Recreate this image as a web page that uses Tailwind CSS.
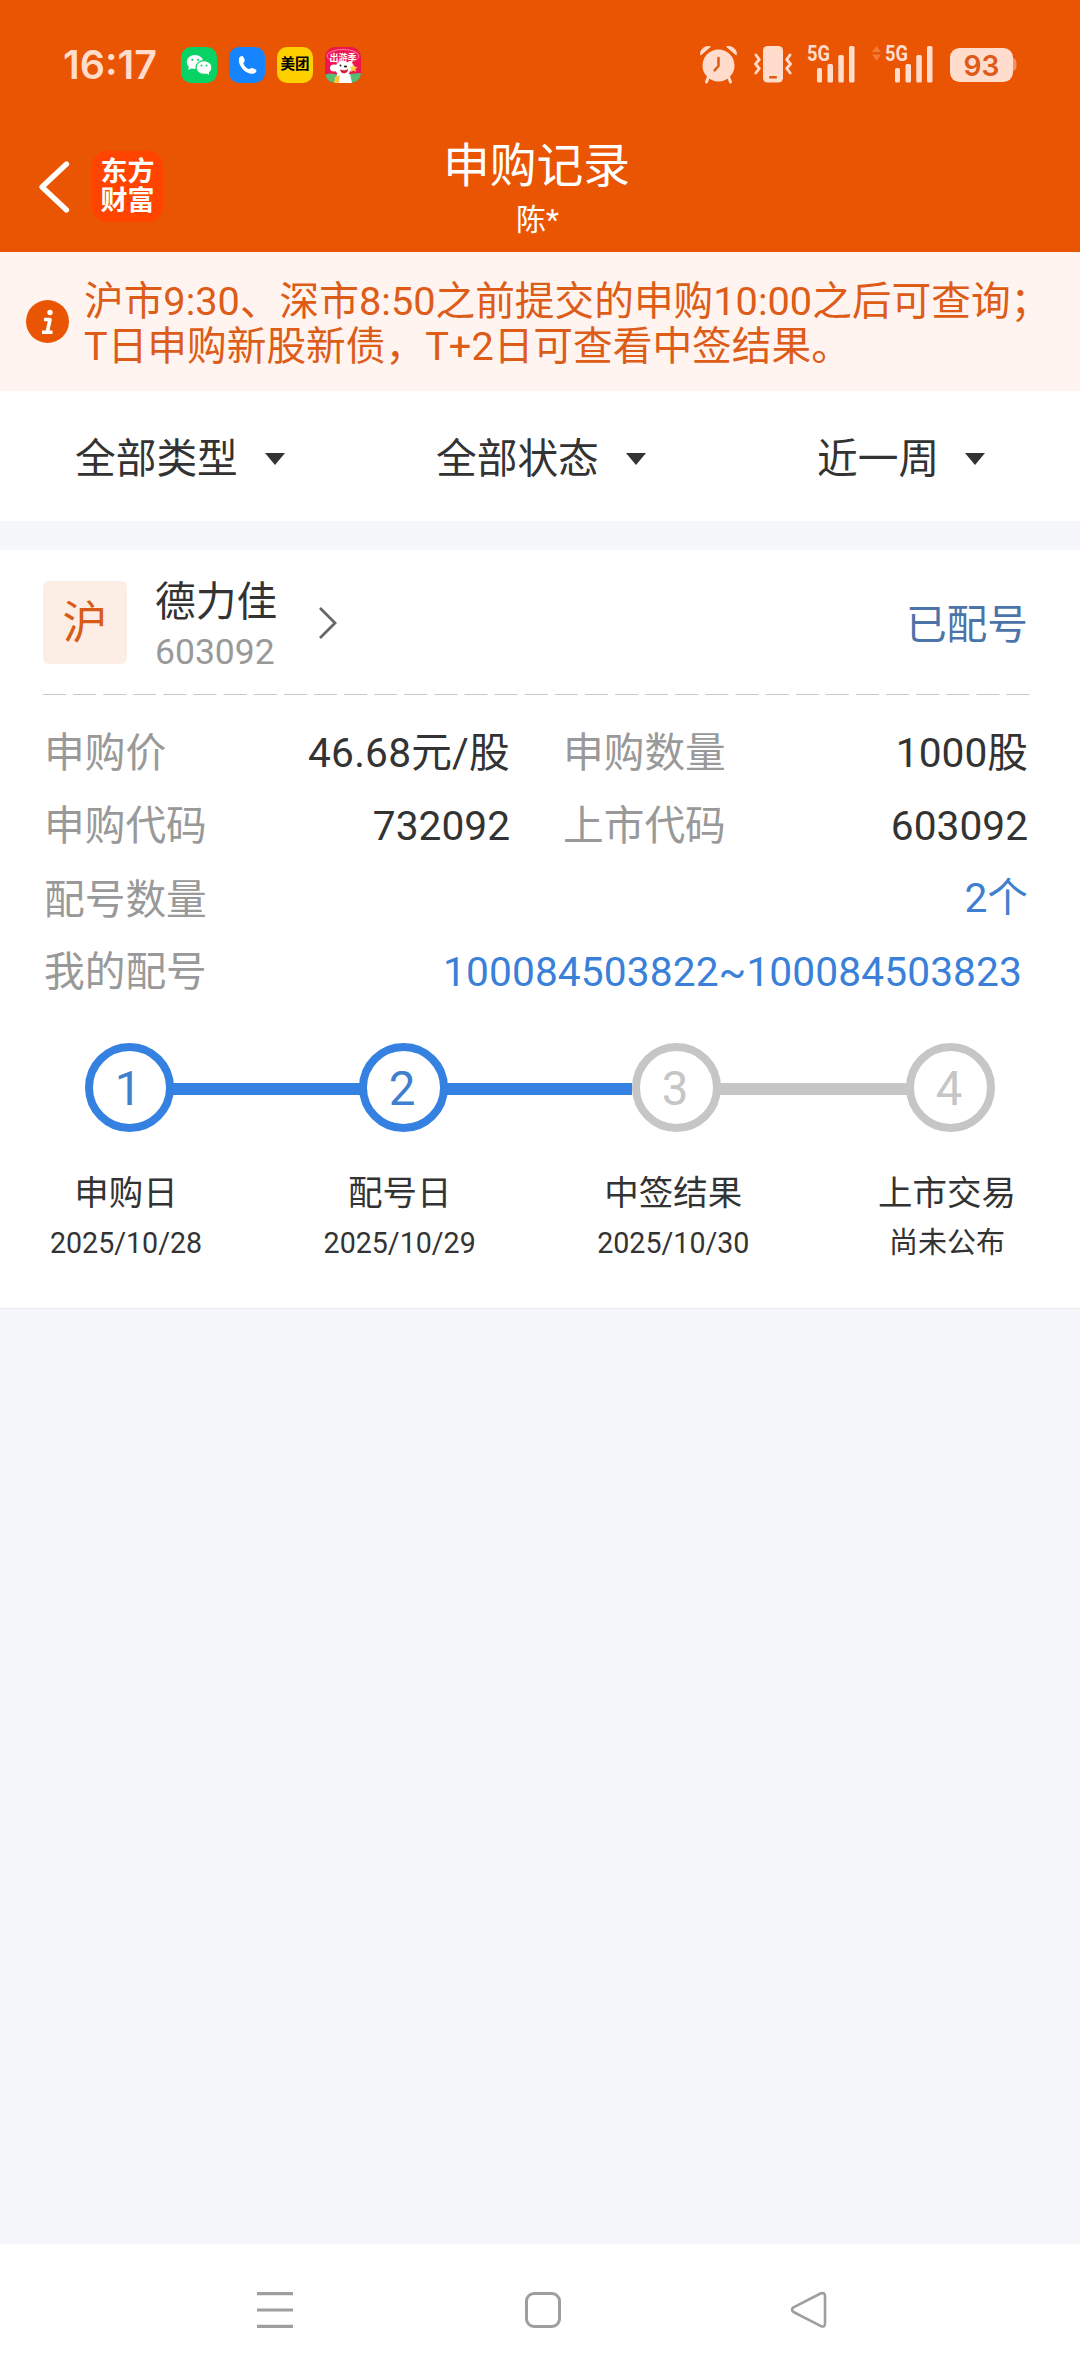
<!DOCTYPE html>
<html lang="zh-CN">
<head>
<meta charset="utf-8">
<title>申购记录</title>
<script src="https://cdn.jsdelivr.net/npm/@tailwindcss/browser@4"></script>
</head>
<body class="flex h-[2376px] w-[1080px] flex-col overflow-hidden bg-[#f6f7fa] font-['Roboto','Noto_Sans_CJK_SC',sans-serif] text-[40.7px] leading-[60px] text-[#333333]">

<header class="h-[252px] shrink-0 bg-[#ea5504] text-white">
  <!-- status bar -->
  <div class="flex h-[130px] items-center pl-[63px] pr-[62px]">
    <div class="w-[118px] whitespace-nowrap font-['Inter'] text-[39.5px] font-semibold leading-[40px] text-[#ffdccb]">16:17</div>
    <div class="flex gap-[12px]">
      <svg class="size-9" viewBox="0 0 36 36">
        <rect width="36" height="36" rx="10" fill="#07d364"/>
        <ellipse cx="14" cy="15" rx="8.3" ry="7" fill="#fff"/><path d="M8 19l-.8 4 4-2z" fill="#fff"/>
        <ellipse cx="23" cy="20.500" rx="8" ry="6.900" fill="#fff" stroke="#07d364" stroke-width="1.200"/><path d="M25 26l3 2-.2-4z" fill="#fff"/>
        <g fill="#07d364"><circle cx="11.300" cy="12.800" r="1.100"/><circle cx="17" cy="12.800" r="1.100"/><circle cx="20.500" cy="18.500" r="1"/><circle cx="25.500" cy="18.500" r="1"/></g>
      </svg>
      <svg class="size-9" viewBox="0 0 36 36">
        <rect width="36" height="36" rx="10" fill="#1684fc"/>
        <path d="M10 11.500c.5-1.800 2.400-3 3.600-2.300 1.200.7 2 3 2.100 4.300 0 1.300-1.400 1.700-1.200 2.900.5 2.200 3 5 5.300 5.600 1.200.2 1.800-1.200 3-1.100 1.500.1 3.800 1.200 4.500 2.300.6 1.100-.6 2.800-2.300 3.300C17.500 28.300 8.500 19 10 11.500z" fill="#fff"/>
      </svg>
      <div class="flex size-9 items-center justify-center whitespace-nowrap rounded-[10px] bg-[#ffd000] text-[14.500px] font-bold leading-none text-black">美团</div>
      <svg class="size-9" viewBox="0 0 36 36">
        <defs><clipPath id="tile"><rect width="36" height="36" rx="10"/></clipPath></defs>
        <g clip-path="url(#tile)">
          <rect width="36" height="36" fill="#ee1550"/>
          <ellipse cx="18" cy="9" rx="16" ry="6.500" fill="none" stroke="#ff7fa8" stroke-width="1"/>
          <path d="M0 28c5-3 10-1 13 0l23-2v10H0z" fill="#57bd72"/>
          <path d="M12 27h13l2 9H11z" fill="#fff"/><path d="M10 30l5-2-1 8h-5z" fill="#ffc63a"/>
          <ellipse cx="18" cy="21.500" rx="8" ry="7.500" fill="#fff"/>
          <ellipse cx="9" cy="21" rx="4" ry="3.500" fill="#fff"/><ellipse cx="25" cy="19" rx="3" ry="5" fill="#fff"/>
          <path d="M15 22.500c3 1.300 6 1 8-.8.300 5-6.500 7-8 .8z" fill="#d32239"/>
          <circle cx="15.500" cy="18.500" r="1" fill="#222"/><ellipse cx="20.500" cy="19.500" rx="1.700" ry="1.100" fill="#222"/>
          <path d="M28.500 17l1.200 2.800 3 .3-2.300 2 .7 3-2.600-1.600-2.700 1.600.7-3-2.200-2 3-.3z" fill="#ffd23c"/>
        </g>
        <text x="18" y="13.500" text-anchor="middle" font-size="9" font-weight="bold" fill="#fff" font-family="Noto Sans CJK SC, sans-serif">出游季</text>
      </svg>
    </div>
    <svg class="ml-auto h-[44px] w-[322px]" viewBox="0 0 322 44" fill="#ffdccb">
      <!-- alarm clock -->
      <g transform="translate(4,2)">
        <circle cx="18.500" cy="20.500" r="16"/>
        <path d="M.8 10C-.5 5 5 .3 10.300 1.700L.8 10zM36.200 10C37.500 5 32 .3 26.700 1.700L36.200 10z" stroke="#ffdccb" stroke-width="1" stroke-linejoin="round"/>
        <path d="M8 33l-1.500 4M29 33l1.500 4" stroke="#ffdccb" stroke-width="3" stroke-linecap="round"/>
        <path d="M18.500 13v8l-4 4.300" fill="none" stroke="#dd5a18" stroke-width="2.500" stroke-linecap="round" stroke-linejoin="round"/>
      </g>
      <!-- vibrating phone -->
      <rect x="67" y="3" width="20" height="36.500" rx="4.500"/>
      <rect x="73" y="33" width="8" height="2.500" rx="1.200" fill="#dd5a18"/>
      <path d="M60 12l3.300 4.500-3.800 4.500 3.800 4.500-3.500 4.500M94 12l-3.300 4.500 3.800 4.500-3.800 4.500 3.500 4.500" fill="none" stroke="#ffdccb" stroke-width="2.800" stroke-linecap="round" stroke-linejoin="round"/>
      <!-- signal meters -->
      <g id="signal">
        <text x="111" y="17.500" font-family="Roboto, sans-serif" font-size="21.500" font-weight="700" textLength="23" lengthAdjust="spacingAndGlyphs">5G</text>
        <rect x="121" y="25" width="5" height="14.500" rx="1.500"/><rect x="131.500" y="21" width="5.500" height="18.500" rx="1.500"/><rect x="142.300" y="12" width="5.500" height="27.500" rx="1.500"/><rect x="153" y="3" width="5.500" height="36.500" rx="1.500"/>
      </g>
      <use href="#signal" x="78"/>
      <path d="M176 9l4.500-6 4.500 6zM176 11.500l4.500 6 4.500-6z" fill="#f27a3a"/>
      <!-- battery -->
      <path d="M317 15q3.500 0 3.500 6.500t-3.500 6.500z" fill="#f39364"/>
      <rect x="254" y="5" width="63" height="34" rx="9.500"/>
      <text x="285.500" y="32.800" text-anchor="middle" font-family="Inter, sans-serif" font-size="29" font-weight="600" fill="#dd5a18" textLength="36" lengthAdjust="spacingAndGlyphs">93</text>
    </svg>
  </div>
  <!-- title bar -->
  <div class="grid h-[122px] grid-cols-[1fr_240px_1fr]">
    <div class="flex items-start pl-[37px] pt-[21px]">
      <svg class="mt-[9px] h-[54px] w-[34px]" viewBox="0 0 34 54" fill="none" stroke="#fff" stroke-width="5.300" stroke-linecap="round" stroke-linejoin="round"><path d="M29.500 4L5 27l24.500 23"/></svg>
      <div class="ml-[21px] flex size-[71px] flex-col items-center justify-center rounded-[15px] bg-[#ff4400] text-[27px] font-bold leading-[29px]"><span>东方</span><span>财富</span></div>
    </div>
    <div class="flex flex-col items-center">
      <h1 class="mt-[6px] -ml-[7px] whitespace-nowrap text-[46.800px] leading-[60px]">申购记录</h1>
      <div class="-ml-[5px] mt-[6px] text-[30px] leading-[36px]">陈*</div>
    </div>
    <div></div>
  </div>
</header>

<section class="flex h-[139px] shrink-0 items-center bg-[#fff4ef] pl-[26px] text-[39.700px] leading-[44.500px] text-[#dc5c18]">
  <div class="flex size-[43px] items-center justify-center rounded-full bg-[#ea5504]">
    <svg class="h-[26px] w-[16px]" viewBox="0 0 16 26" fill="none" stroke="#fff" stroke-width="3.600"><circle cx="10" cy="3.500" r="2.700" fill="#fff" stroke="none"/><path d="M4 10.500h6L7.300 23M2 23.200h10.500" stroke-linejoin="round"/></svg>
  </div>
  <p class="ml-[15px] mt-[6px] whitespace-nowrap">沪市9:30、深市8:50之前提交的申购10:00之后可查询；<br>T日申购新股新债，T+2日可查看中签结果。</p>
</section>

<nav class="flex h-[130px] shrink-0 items-center bg-white px-[75px] pt-[5px]">
  <div class="flex w-[361px] items-center gap-[27px]"><span>全部类型</span><svg class="h-[12px] w-[20px]" viewBox="0 0 20 12"><path d="M0 0h20L10 12z" fill="#333"/></svg></div>
  <div class="flex w-[381px] items-center gap-[27px]"><span>全部状态</span><svg class="h-[12px] w-[20px]" viewBox="0 0 20 12"><path d="M0 0h20L10 12z" fill="#333"/></svg></div>
  <div class="flex items-center gap-[26px]"><span>近一周</span><svg class="h-[12px] w-[20px]" viewBox="0 0 20 12"><path d="M0 0h20L10 12z" fill="#333"/></svg></div>
</nav>

<main class="mt-[29px] h-[759px] shrink-0 border-b border-[#e9eaec] bg-white">
  <div class="flex h-[144px] items-start pl-[43px] pr-[52px] pt-[31px]">
    <div class="flex h-[83px] w-[84px] items-center justify-center rounded-[6px] bg-[#fceee5] pt-[2px] text-[45px] text-[#d95b18]">沪</div>
    <div class="ml-[28px] flex w-[123px] flex-col">
      <span class="h-[46px] leading-[42px]">德力佳</span>
      <span class="text-[35.500px] leading-[50px] text-[#999999]">603092</span>
    </div>
    <svg class="ml-[39px] mt-[24px] h-[36px] w-[24px]" viewBox="0 0 24 36" fill="none" stroke="#666" stroke-width="2.800"><path d="M3 3l15 15L3 33"/></svg>
    <span class="ml-auto mt-[14px] text-[#4c74a8]">已配号</span>
  </div>
  <svg class="ml-[43px] h-px w-[987px]" viewBox="0 0 987 1"><path d="M0 .5h987" stroke="#c8c8c8" stroke-width="1" stroke-dasharray="23 7.110"/></svg>

  <dl class="mt-[22px] flex flex-col pl-[44px] pr-[52px] text-[#999999]">
    <div class="flex h-[72px] items-center">
      <dt>申购价</dt><dd class="ml-auto tracking-[0.2px] text-[#333333]">46.68元/股</dd>
      <dt class="ml-[53px] w-[164px]">申购数量</dt><dd class="w-[301px] text-right text-[#333333]">1000股</dd>
    </div>
    <div class="flex h-[73px] items-center">
      <dt>申购代码</dt><dd class="ml-auto text-[#333333]">732092</dd>
      <dt class="ml-[53px] w-[164px]">上市代码</dt><dd class="w-[301px] text-right text-[#333333]">603092</dd>
    </div>
    <div class="flex h-[73px] items-center justify-between"><dt class="mt-[3px]">配号数量</dt><dd class="-mt-[1px] text-[#3f7fd0]">2个</dd></div>
    <div class="flex h-[73px] items-center justify-between"><dt>我的配号</dt><dd class="mr-[6px] tracking-[0.1px] text-[#3a7fd8]">100084503822~100084503823</dd></div>
  </dl>

  <ol class="mt-[35px] flex h-[89px] items-center pl-[85px] text-[47.500px] text-[#c6c6c6]">
    <li class="flex size-[89px] items-center justify-center rounded-full border-[8.500px] border-[#3581e2] pt-[3px] pr-[3px] text-[#3f7fd0]">1</li>
    <li class="-mx-[2px] mt-[3px] h-[12px] w-[189px] bg-[#3581e2]"></li>
    <li class="flex size-[89px] items-center justify-center rounded-full border-[8.500px] border-[#3581e2] pt-[3px] pr-[3px] text-[#3f7fd0]">2</li>
    <li class="-ml-[2px] mt-[3px] h-[12px] w-[186px] bg-[#3581e2]"></li>
    <li class="flex size-[89px] items-center justify-center rounded-full border-[8.500px] border-[#c6c6c6] pt-[3px] pr-[3px]">3</li>
    <li class="-mx-[2px] mt-[3px] h-[12px] w-[189px] bg-[#c6c6c6]"></li>
    <li class="flex size-[89px] items-center justify-center rounded-full border-[8.500px] border-[#c6c6c6] pt-[3px] pr-[3px]">4</li>
  </ol>
  <div class="mt-[36px] flex justify-between pl-[36px] pr-[43px] text-center text-[34.500px] leading-[50px]">
    <div class="w-[180px]"><div>申购日</div><div class="text-[28.600px]">2025/10/28</div></div>
    <div class="w-[180px]"><div>配号日</div><div class="text-[28.600px]">2025/10/29</div></div>
    <div class="w-[180px]"><div>中签结果</div><div class="text-[28.600px]">2025/10/30</div></div>
    <div class="w-[180px]"><div>上市交易</div><div class="text-[29px]">尚未公布</div></div>
  </div>
</main>

<footer class="mt-auto flex h-[132px] shrink-0 bg-white pl-[255px] pt-[46px]">
  <svg class="size-[40px]" viewBox="0 0 40 40" stroke="#9e9e9e" stroke-width="3.200" stroke-linecap="butt"><path d="M2 3.700h36M2 20h36M2 36.300h36"/></svg>
  <svg class="ml-[228px] size-[40px]" viewBox="0 0 40 40" fill="none" stroke="#9e9e9e" stroke-width="3"><rect x="3.500" y="3.500" width="33" height="33" rx="7.500"/></svg>
  <svg class="ml-[226px] size-[40px]" viewBox="0 0 40 40" fill="none" stroke="#9e9e9e" stroke-width="2.600" stroke-linejoin="round"><path d="M4.500 17.300L31.500 3.500Q36 2 36 6v27.500Q36 38 31.500 35.800L4.500 22Q1.500 19.600 4.500 17.300z"/></svg>
</footer>
</body>
</html>
